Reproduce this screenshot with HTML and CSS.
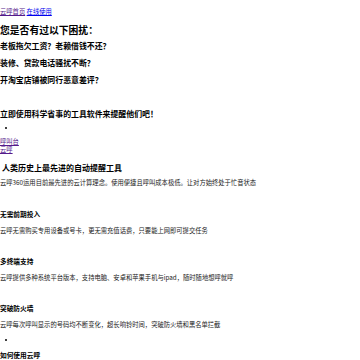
FILE: index.html
```html
<!DOCTYPE html>
<html lang="zh">
<head>
<meta charset="utf-8">
<link rel="stylesheet" href="styles.css">
</head>
<body>
<div class="nav"><a class="visited" href="#">云呼首页</a> <a href="#">在线使用</a></div>
<h2 class="title">您是否有过以下困扰：</h2>
<h3 class="pain">老板拖欠工资？老赖借钱不还？</h3>
<h3 class="pain">装修、贷款电话骚扰不断？</h3>
<h3 class="pain">开淘宝店铺被同行恶意差评？</h3>
<h3 class="pain"></h3>
<h3 class="pain">立即使用科学省事的工具软件来提醒他们吧！</h3>
<ul class="dots"><li></li></ul>
<div class="links"><a class="visited" href="#">呼叫台</a><br><a class="visited" href="#">云呼</a></div>
<h3 class="lead">人类历史上最先进的自动提醒工具</h3>
<p class="text first">云呼360运用目前最先进的云计算理念。使用便捷且呼叫成本极低。让对方始终处于忙音状态</p>
<h4 class="feat">无需前期投入</h4>
<p class="text">云呼无需购买专用设备或号卡，更无需充值话费，只要能上网即可提交任务</p>
<h4 class="feat">多终端支持</h4>
<p class="text">云呼提供多种系统平台版本，支持电脑、安卓和苹果手机与ipad，随时随地想呼就呼</p>
<h4 class="feat">突破防火墙</h4>
<p class="text">云呼每次呼叫显示的号码均不断变化，超长响铃时间，突破防火墙和黑名单拦截</p>
<ul class="dots dots2"><li></li></ul>
<h4 class="feat last">如何使用云呼</h4>
</body>
</html>
```
FILE: styles.css
```css
html, body {
  margin: 0;
  padding: 0;
  background: #fff;
  color: #000;
  font-family: "Noto Sans CJK SC", "Liberation Serif", sans-serif;
}
a { color: #0000ee; text-decoration: underline; }
a.visited { color: #551a8b; }
.nav {
  font-size: 6.3px;
  line-height: 8px;
  height: 8px;
  margin-top: 8px;
}
.title {
  font-size: 9.8px;
  line-height: 12px;
  height: 12px;
  margin: 8px 0 0;
  font-weight: bold;
}
.pain {
  font-size: 7.9px;
  line-height: 10px;
  height: 10px;
  margin: 7px 0 0;
  font-weight: bold;
}
.title + .pain { margin-top: 5px; }
.dots {
  margin: 5px 0 0;
  padding-left: 16px;
  font-size: 6px;
  line-height: 8px;
  height: 8px;
}
.dots li { height: 8px; }
.links {
  font-size: 6.3px;
  line-height: 8px;
  height: 16px;
  margin-top: 6px;
}
.lead {
  font-size: 8px;
  line-height: 10px;
  height: 10px;
  margin: 9px 0 0 2px;
  font-weight: bold;
}
.text {
  font-size: 6.3px;
  line-height: 8px;
  height: 8px;
  margin: 9px 0 0;
  color: #222;
  white-space: nowrap;
}
.text.first { margin-top: 6px; }
.feat {
  font-size: 6.7px;
  line-height: 8px;
  height: 8px;
  margin: 22px 0 0;
  font-weight: bold;
}
.text.first + .feat { margin-top: 23px; }
.dots2 { margin-top: 7px; }
.feat.last { margin-top: 7px; }
```
